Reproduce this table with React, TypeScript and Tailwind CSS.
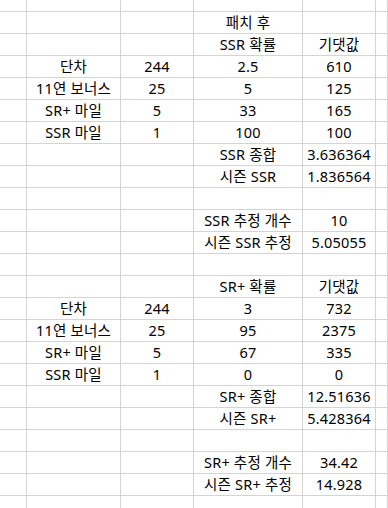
import React from "react";

type Row = [string, string, string, string];

const rows: Row[] = [
  ["", "", "패치 후", ""],
  ["", "", "SSR 확률", "기댓값"],
  ["단차", "244", "2.5", "610"],
  ["11연 보너스", "25", "5", "125"],
  ["SR+ 마일", "5", "33", "165"],
  ["SSR 마일", "1", "100", "100"],
  ["", "", "SSR 종합", "3.636364"],
  ["", "", "시즌 SSR", "1.836564"],
  ["", "", "", ""],
  ["", "", "SSR 추정 개수", "10"],
  ["", "", "시즌 SSR 추정", "5.05055"],
  ["", "", "", ""],
  ["", "", "SR+ 확률", "기댓값"],
  ["단차", "244", "3", "732"],
  ["11연 보너스", "25", "95", "2375"],
  ["SR+ 마일", "5", "67", "335"],
  ["SSR 마일", "1", "0", "0"],
  ["", "", "SR+ 종합", "12.51636"],
  ["", "", "시즌 SR+", "5.428364"],
  ["", "", "", ""],
  ["", "", "SR+ 추정 개수", "34.42"],
  ["", "", "시즌 SR+ 추정", "14.928"],
  ["", "", "", ""],
];

const cell =
  "border-r border-b border-[#d4d4d4] flex items-center justify-center whitespace-nowrap overflow-visible";

export default function App() {
  return (
    <div
      className="w-[388px] h-[508px] overflow-hidden bg-white text-black text-[14.5px]"
      style={{ fontFamily: '"Noto Sans", "Noto Sans CJK KR", sans-serif' }}
    >
      <div className="grid grid-cols-[27px_94px_73px_109px_73px_1fr]">
        {[0, 1, 2, 3, 4, 5].map((i) => (
          <div key={"t" + i} className={cell + " h-[12px]"} />
        ))}
        {rows.map((r, ri) => (
          <React.Fragment key={ri}>
            <div className={cell + " h-[22px]"} />
            {r.map((t, ci) => (
              <div key={ci} className={cell + " h-[22px] leading-[21px] tracking-[0.2px]"}>
                {t}
              </div>
            ))}
            <div className={cell + " h-[22px]"} />
          </React.Fragment>
        ))}
      </div>
    </div>
  );
}
